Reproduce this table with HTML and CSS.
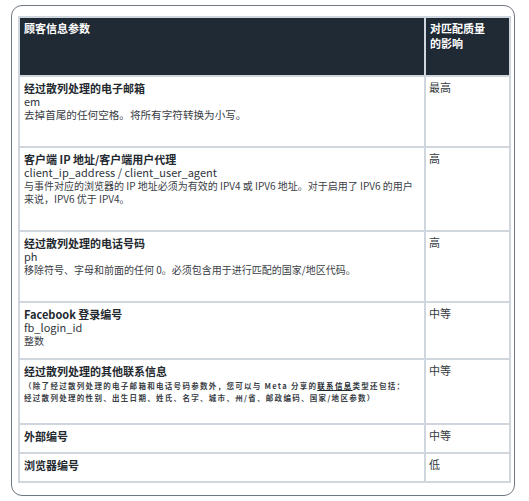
FILE: index.html
```html
<!DOCTYPE html>
<html lang="zh-CN">
<head>
<meta charset="utf-8">
<link rel="stylesheet" href="styles.css">
</head>
<body>
<div class="frame">
  <table class="params">
    <colgroup><col class="c1"><col class="c2"></colgroup>
    <thead>
      <tr class="h-head">
        <th>顾客信息参数</th>
        <th>对匹配质量<br>的影响</th>
      </tr>
    </thead>
    <tbody>
      <tr class="r1">
        <td><div class="t">经过散列处理的电子邮箱</div><div class="k">em</div><div class="d d11">去掉首尾的任何空格。将所有字符转换为小写。</div></td>
        <td class="v">最高</td>
      </tr>
      <tr class="r2">
        <td><div class="t">客户端 IP 地址/客户端用户代理</div><div class="k">client_ip_address / client_user_agent</div><div class="d">与事件对应的浏览器的 IP 地址必须为有效的 IPV4 或 IPV6 地址。对于启用了 IPV6 的用户来说，IPV6 优于 IPV4。</div></td>
        <td class="v">高</td>
      </tr>
      <tr class="r3">
        <td><div class="t">经过散列处理的电话号码</div><div class="k">ph</div><div class="d">移除符号、字母和前面的任何 0。必须包含用于进行匹配的国家/地区代码。</div></td>
        <td class="v">高</td>
      </tr>
      <tr class="r4">
        <td><div class="t">Facebook 登录编号</div><div class="k">fb_login_id</div><div class="d">整数</div></td>
        <td class="v">中等</td>
      </tr>
      <tr class="r5">
        <td><div class="t">经过散列处理的其他联系信息</div><div class="s">（除了经过散列处理的电子邮箱和电话号码参数外，您可以与 Meta 分享的<span class="u">联系信息</span>类型还包括：<br>经过散列处理的性别、出生日期、姓氏、名字、城市、州/省、邮政编码、国家/地区参数）</div></td>
        <td class="v">中等</td>
      </tr>
      <tr class="r6">
        <td><div class="t">外部编号</div></td>
        <td class="v">中等</td>
      </tr>
      <tr class="r7">
        <td><div class="t">浏览器编号</div></td>
        <td class="v">低</td>
      </tr>
    </tbody>
  </table>
</div>
</body>
</html>
```
FILE: styles.css
```css
html, body {
  margin: 0;
  padding: 0;
  background: #ffffff;
}
body {
  font-family: "Noto Sans CJK SC", "Noto Sans", sans-serif;
  color: #333a40;
  padding: 5px 14px 6px 11px;
}
.frame {
  border: 1.5px solid #6f7780;
  border-radius: 11px;
  padding: 10px 7px 8px 6px;
  height: 471px;
}
.params {
  width: 491px;
  border-collapse: collapse;
  table-layout: fixed;
}
.c1 { width: 406px; }
.c2 { width: 85px; }
.params th, .params td {
  border: 2px solid #cfd6de;
  vertical-align: top;
  text-align: left;
  padding: 4px 4px 0 4px;
}
.params th {
  background: #1f2a35;
  color: #ffffff;
  font-size: 11px;
  font-weight: 700;
  line-height: 15px;
  padding-top: 3px;
}
.params td.v { padding-left: 3px; }
.h-head { height: 59px; }
.r1 { height: 71px; }
.r2 { height: 84px; }
.r3 { height: 71px; }
.r4 { height: 57px; }
.r5 { height: 65px; }
.r6 { height: 29px; }
.r7 { height: 29px; }
.t {
  font-size: 11px;
  font-weight: 700;
  color: #23292f;
  line-height: 14px;
}
.k {
  font-size: 11px;
  line-height: 13px;
  color: #2f363c;
}
.d {
  font-size: 10px;
  line-height: 13px;
  color: #3a4046;
}
.d11 { font-size: 10.6px; }
.s {
  font-size: 7.5px;
  line-height: 12px;
  letter-spacing: 1.3px;
  font-weight: 700;
  color: #3a4046;
  margin-top: 2px;
  white-space: nowrap;
}
.u {
  text-decoration: underline;
  text-decoration-thickness: 1px;
  color: #23292f;
}
.v {
  font-size: 11px;
  line-height: 13px;
  color: #333a40;
}
```
